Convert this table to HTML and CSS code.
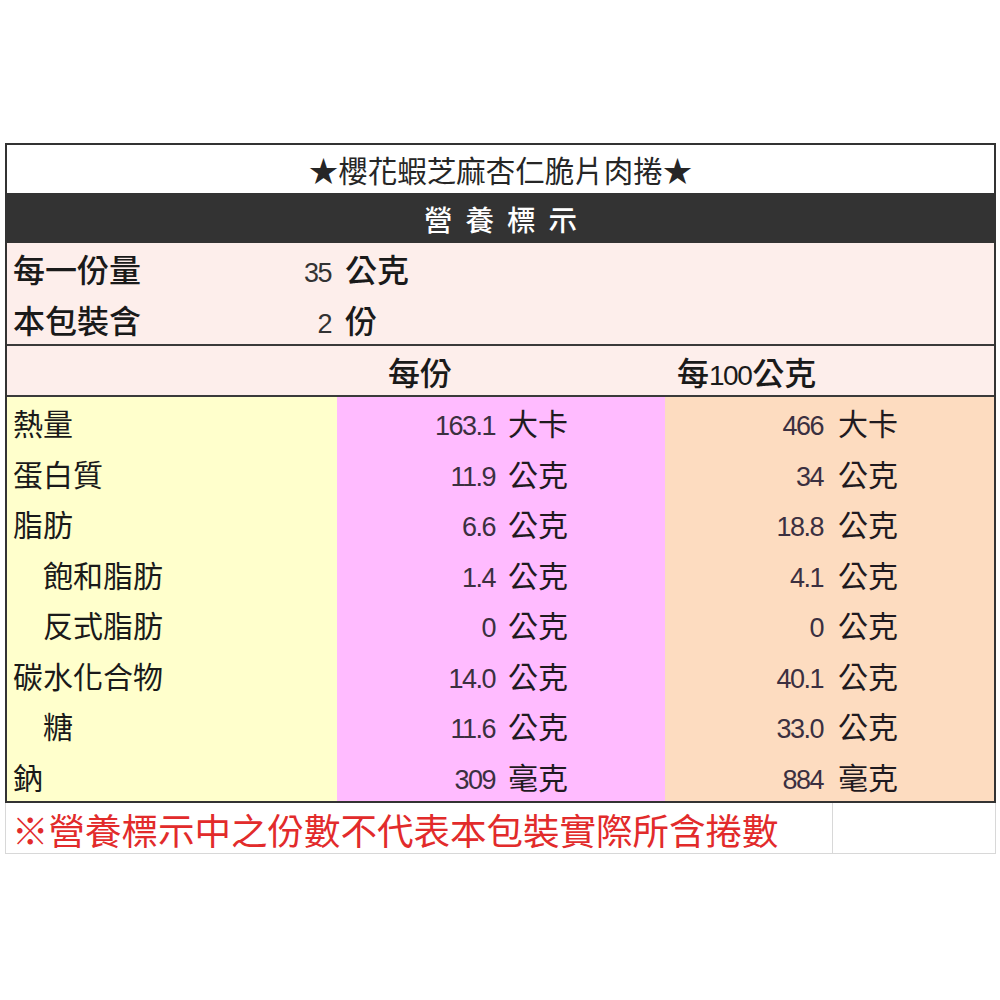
FILE: index.html
```html
<!DOCTYPE html>
<html lang="zh-Hant">
<head>
<meta charset="utf-8">
<title>營養標示</title>
<link rel="stylesheet" href="styles.css">
</head>
<body>
<div class="sheet">
  <div class="title">★櫻花蝦芝麻杏仁脆片肉捲★</div>
  <div class="band">營養標示</div>
  <div class="serving">
    <div class="srow"><span class="slabel">每一份量</span><span class="snum">35</span><span class="sunit">公克</span></div>
    <div class="srow"><span class="slabel">本包裝含</span><span class="snum">2</span><span class="sunit">份</span></div>
  </div>
  <div class="head">
    <div class="hcell"></div>
    <div class="hcell hper">每份</div>
    <div class="hcell h100">每<span class="hdig">100</span>公克</div>
  </div>
  <div class="data">
    <div class="row">
      <div class="lab">熱量</div>
      <div class="val pink"><span class="num">163.1</span><span class="unit">大卡</span></div>
      <div class="val peach"><span class="num">466</span><span class="unit">大卡</span></div>
    </div>
    <div class="row">
      <div class="lab">蛋白質</div>
      <div class="val pink"><span class="num">11.9</span><span class="unit">公克</span></div>
      <div class="val peach"><span class="num">34</span><span class="unit">公克</span></div>
    </div>
    <div class="row">
      <div class="lab">脂肪</div>
      <div class="val pink"><span class="num">6.6</span><span class="unit">公克</span></div>
      <div class="val peach"><span class="num">18.8</span><span class="unit">公克</span></div>
    </div>
    <div class="row">
      <div class="lab sub">飽和脂肪</div>
      <div class="val pink"><span class="num">1.4</span><span class="unit">公克</span></div>
      <div class="val peach"><span class="num">4.1</span><span class="unit">公克</span></div>
    </div>
    <div class="row">
      <div class="lab sub">反式脂肪</div>
      <div class="val pink"><span class="num">0</span><span class="unit">公克</span></div>
      <div class="val peach"><span class="num">0</span><span class="unit">公克</span></div>
    </div>
    <div class="row">
      <div class="lab">碳水化合物</div>
      <div class="val pink"><span class="num">14.0</span><span class="unit">公克</span></div>
      <div class="val peach"><span class="num">40.1</span><span class="unit">公克</span></div>
    </div>
    <div class="row">
      <div class="lab sub">糖</div>
      <div class="val pink"><span class="num">11.6</span><span class="unit">公克</span></div>
      <div class="val peach"><span class="num">33.0</span><span class="unit">公克</span></div>
    </div>
    <div class="row">
      <div class="lab">鈉</div>
      <div class="val pink"><span class="num">309</span><span class="unit">毫克</span></div>
      <div class="val peach"><span class="num">884</span><span class="unit">毫克</span></div>
    </div>
  </div>
</div>
<div class="footer">
  <div class="note">※營養標示中之份數不代表本包裝實際所含捲數</div>
  <div class="blank"></div>
</div>
</body>
</html>
```

FILE: styles.css
```css
* { box-sizing: border-box; }
html, body { margin: 0; padding: 0; background: #ffffff; }
body {
  font-family: "Noto Sans CJK TC", "Noto Sans CJK SC", sans-serif;
  color: #1a1a1a;
}
.sheet {
  margin: 143px 0 0 5px;
  width: 991px;
  border: 2px solid #333333;
  border-bottom: none;
}
.title {
  height: 48px;
  display: flex;
  align-items: center;
  justify-content: center;
  font-size: 29.5px;
  color: #262626;
  background: #fff;
}
.band {
  height: 50px;
  display: flex;
  align-items: center;
  justify-content: center;
  background: #333333;
  color: #ffffff;
  font-size: 28.5px;
  font-weight: 500;
  letter-spacing: 13px;
  padding-left: 13px;
}
.serving {
  background: #fdeeeb;
  border-bottom: 2px solid #3a3a3a;
}
.srow {
  height: 51px;
  line-height: 51px;
  white-space: nowrap;
  overflow: hidden;
  font-size: 32px;
  font-weight: 500;
}
.srow:last-child { height: 50px; line-height: 50px; }
.slabel {
  display: inline-block;
  width: 160px;
  padding-left: 6px;
  line-height: 1.2;
}
.snum {
  display: inline-block;
  width: 164px;
  text-align: right;
  font-family: "Liberation Sans", sans-serif;
  font-weight: 400;
  font-size: 27px;
  letter-spacing: -1.5px;
  line-height: 1.2;
  color: #333;
}
.sunit {
  display: inline-block;
  padding-left: 14px;
  line-height: 1.2;
}
.head {
  height: 51px;
  display: grid;
  grid-template-columns: 330px 328px 1fr;
  align-items: center;
  background: #fdeeeb;
  border-bottom: 2px solid #3a3a3a;
  font-size: 32px;
  font-weight: 500;
}
.hper { padding-left: 51px; }
.h100 { padding-left: 12px; }
.hcell { white-space: nowrap; }
.hdig {
  font-family: "Liberation Sans", sans-serif;
  font-weight: 400;
  font-size: 28px;
  letter-spacing: -1.5px;
  padding-right: 1px;
}
.data { border-bottom: 2px solid #333; }
.row {
  height: 50.5px;
  display: grid;
  grid-template-columns: 330px 328px 1fr;
  grid-template-rows: 100%;
  overflow: hidden;
}
.lab {
  background: #ffffcc;
  line-height: 50px;
  padding-left: 6px;
  font-size: 30px;
  color: #1a1a1a;
  white-space: nowrap;
}
.lab.sub { padding-left: 36px; }
.val {
  line-height: 50px;
  font-size: 30px;
  white-space: nowrap;
  color: #3a2a3a;
}
.pink { background: #ffbbff; }
.peach { background: #fddcc0; }
.num {
  display: inline-block;
  width: 158px;
  text-align: right;
  font-family: "Liberation Sans", sans-serif;
  font-size: 27px;
  letter-spacing: -1.5px;
  line-height: 1.2;
  color: #3b3040;
}
.unit {
  display: inline-block;
  padding-left: 13px;
  line-height: 1.2;
  color: #1f1a1f;
}
.peach .unit { padding-left: 15px; }
.footer {
  margin-left: 5px;
  width: 991px;
  height: 51px;
  display: grid;
  grid-template-columns: 826px 1fr;
  border-bottom: 1px solid #d8d8d8;
  border-left: 1px solid #d8d8d8;
}
.note {
  display: flex;
  align-items: center;
  padding-left: 6px;
  font-size: 36.5px;
  color: #e22b2b;
  white-space: nowrap;
}
.blank {
  border-left: 1px solid #d8d8d8;
  border-right: 1px solid #d8d8d8;
}
```
